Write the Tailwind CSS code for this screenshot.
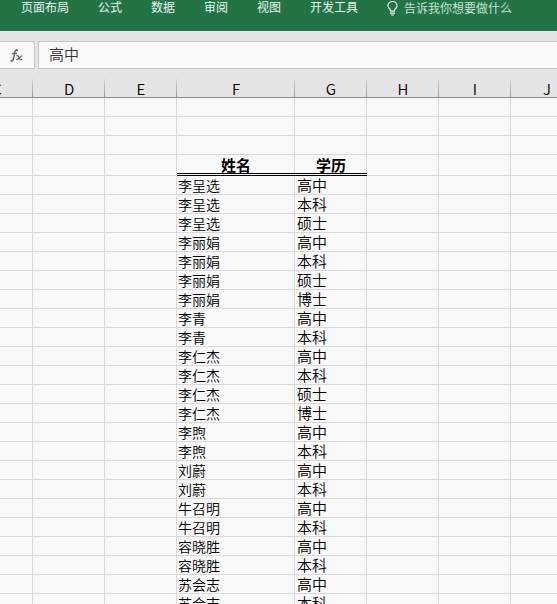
<!DOCTYPE html>
<html lang="zh-CN">
  <head>
    <meta charset="UTF-8" />
    <meta name="viewport" content="width=device-width, initial-scale=1.0" />
    <title>学历表</title>
    <script src="https://cdn.jsdelivr.net/npm/@tailwindcss/browser@4"></script>
  </head>
  <body
    class="h-screen flex flex-col overflow-hidden bg-[#e5e5e5] text-black font-['Noto_Sans_CJK_SC',sans-serif]"
  >
    <nav
      class="h-[31px] shrink-0 flex items-start gap-[29px] pl-[21px] bg-[#227447] text-xs leading-[14px] text-[#eaf5ee] whitespace-nowrap"
    >
      <a href="#layout">页面布局</a>
      <a href="#formulas">公式</a>
      <a href="#data">数据</a>
      <a href="#review">审阅</a>
      <a href="#view">视图</a>
      <a href="#developer">开发工具</a>
      <label class="flex grow items-start gap-[6px] pt-px">
        <svg
          class="w-[11px] h-[15px] shrink-0"
          viewBox="0 0 11 15"
          fill="none"
          stroke="#eaf5ee"
          stroke-width="1.2"
        >
          <path
            d="M3.5 10.2V9.2C3.5 8 1 7.200 1 4.700A4.500 4.200 0 0 1 10 4.700C10 7.200 7.500 8 7.500 9.200V10.200Z"
          />
          <path d="M3 12.200H8M4 14H7" />
        </svg>
        <input
          type="text"
          aria-label="告诉我你想要做什么"
          placeholder="告诉我你想要做什么"
          class="grow min-w-0 h-[14px] leading-[14px] bg-transparent outline-none placeholder:text-[#c4e3d1]"
        />
      </label>
    </nav>

    <div class="shrink-0 flex gap-[3px] pt-[10px]">
      <button
        type="button"
        aria-label="插入函数"
        class="w-[35px] h-7 flex items-center justify-end pr-[11px] bg-[#f9f9f9] border border-l-0 border-[#c6c6c6]"
      >
        <svg
          class="w-[13px] h-[13px]"
          viewBox="0 0 13 13"
          fill="none"
          stroke="#666"
          stroke-linecap="round"
        >
          <path
            stroke-width="1.500"
            d="M7.500 1.300C6.300 .3 5.300 1.200 4.900 3L3.500 9.500C3.100 11.500 2.300 12.500 1 11.800M2.500 4.500H6.500"
          />
          <path
            stroke-width="1.200"
            d="M6.800 6.800C8.300 6 8.800 7.500 9.300 9S10.500 11.300 12 10.300M12 6.800C10.300 6.800 8.800 10.800 6.600 10.500"
          />
        </svg>
      </button>
      <input
        type="text"
        aria-label="编辑栏"
        value="高中"
        class="grow min-w-0 h-7 pl-[10px] pb-1 bg-[#f9f9f9] border border-r-0 border-[#c6c6c6] text-[15px] font-[350] text-[#333] outline-none"
      />
    </div>

    <main class="grow min-h-0 overflow-hidden pt-[10px]">
      <div class="-ml-[39px]">
        <table
          class="table-fixed w-[1774px] border-separate border-spacing-0 bg-[#f9f9f9]"
        >
          <thead>
            <tr id="letters"></tr>
          </thead>
          <tbody id="cells"></tbody>
        </table>
      </div>
    </main>

    <script>
      const letters = "CDEFGHIJKLMNOPQRSTUVWXYZ".split("");
      const people = [
        ["李呈选", 3],
        ["李丽娟", 4],
        ["李青", 2],
        ["李仁杰", 4],
        ["李煦", 2],
        ["刘蔚", 2],
        ["牛召明", 2],
        ["容晓胜", 2],
        ["苏会志", 2],
      ];
      const degrees = ["高中", "本科", "硕士", "博士"];

      // three empty rows, the title row, then one row per person and degree
      const rows = [[], [], [], ["姓名", "学历"]];
      people.forEach(([name, count]) => {
        degrees.slice(0, count).forEach((degree) => rows.push([name, degree]));
      });
      while (rows.length < 60) rows.push([]);

      document.getElementById("letters").innerHTML = letters
        .map((letter) => {
          const width = letter === "F" ? "w-[118px]" : "w-[72px]";
          return `<th scope="col" class="${width} h-[19px] p-0 pt-[2px] border-b border-[#8f8f8f] bg-[#e5e5e5] bg-linear-to-b from-[#d5d5d5] to-[#9a9a9a] bg-size-[1px_18px] bg-right-bottom bg-no-repeat text-[15px] leading-4 font-[350]">${letter}</th>`;
        })
        .join("");

      document.getElementById("cells").innerHTML = rows
        .map((row, i) => {
          const cells = letters.map((letter) => {
            const text =
              letter === "F" ? row[0] : letter === "G" ? row[1] : undefined;
            if (i === 3 && text) {
              return `<th scope="col" class="h-[21px] p-0 pt-[2px] bg-linear-to-b from-[#d9d9d9] to-[#d9d9d9] bg-size-[1px_18px] bg-right-top bg-no-repeat border-b-3 border-double border-black text-[15px] leading-4 font-bold">${text}</th>`;
            }
            const style =
              letter === "F"
                ? "pl-px text-sm leading-[18px] font-[350]"
                : "pl-[2px] text-[15px] leading-[18px] font-[350]";
            return `<td class="p-0 border-r border-b border-[#d9d9d9] whitespace-nowrap ${style}">${text || ""}</td>`;
          });
          return `<tr class="${i === 3 ? "h-[21px]" : "h-[19px]"}">${cells.join("")}</tr>`;
        })
        .join("");
    </script>
  </body>
</html>
